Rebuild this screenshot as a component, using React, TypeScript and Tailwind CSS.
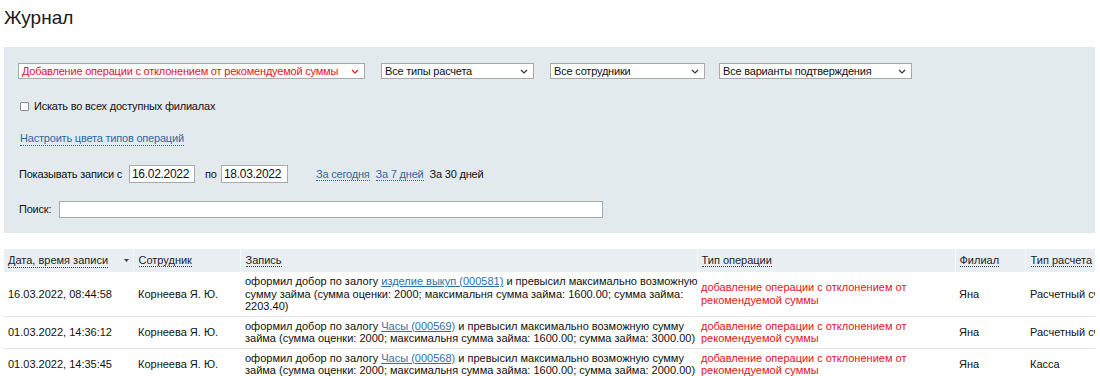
import React from "react";

function Chevron({ color = "#333" }: { color?: string }) {
  return (
    <svg width="8" height="5" viewBox="0 0 8 5" className="shrink-0">
      <polyline points="1,1 4,4 7,1" fill="none" stroke={color} strokeWidth="1.2" />
    </svg>
  );
}

function FakeSelect({ text, w, red }: { text: string; w: string; red?: boolean }) {
  return (
    <div
      className={`${w} h-[16px] bg-white border border-[#a9a9a9] flex items-center justify-between pl-[3px] pr-[5px] leading-[14px] ${
        red ? "text-[#e5131b]" : "text-[#111]"
      }`}
    >
      <span className="whitespace-nowrap">{text}</span>
      <Chevron color={red ? "#e5131b" : "#333"} />
    </div>
  );
}

function DLink({ children }: { children: React.ReactNode }) {
  return (
    <span className="text-[#2b6aa0] border-b border-dotted border-[#2b6aa0] leading-[13px] cursor-pointer whitespace-nowrap">
      {children}
    </span>
  );
}

function ULink({ children }: { children: React.ReactNode }) {
  return <span className="text-[#2e6fa7] underline">{children}</span>;
}

function HeadTitle({ children }: { children: React.ReactNode }) {
  return (
    <span className="border-b border-dotted border-[#444] leading-[13px] whitespace-nowrap">{children}</span>
  );
}

const rows = [
  {
    date: "16.03.2022, 08:44:58",
    emp: "Корнеева Я. Ю.",
    rec: (
      <>
        оформил добор по залогу <ULink>изделие выкуп (000581)</ULink> и превысил максимально возможную
        <br />
        сумму займа (сумма оценки: 2000; максимальня сумма займа: 1600.00; сумма займа:
        <br />
        2203.40)
      </>
    ),
    pay: "Расчетный счет",
  },
  {
    date: "01.03.2022, 14:36:12",
    emp: "Корнеева Я. Ю.",
    rec: (
      <>
        оформил добор по залогу <ULink>Часы (000569)</ULink> и превысил максимально возможную сумму
        <br />
        займа (сумма оценки: 2000; максимальня сумма займа: 1600.00; сумма займа: 3000.00)
      </>
    ),
    pay: "Расчетный счет",
  },
  {
    date: "01.03.2022, 14:35:45",
    emp: "Корнеева Я. Ю.",
    rec: (
      <>
        оформил добор по залогу <ULink>Часы (000568)</ULink> и превысил максимально возможную сумму
        <br />
        займа (сумма оценки: 2000; максимальня сумма займа: 1600.00; сумма займа: 2000.00)
      </>
    ),
    pay: "Касса",
  },
];

export default function App() {
  return (
    <div className="w-[1100px] h-[376px] overflow-hidden bg-white text-[11px] text-[#111] font-['Liberation_Sans',Arial,sans-serif]">
      <div className="h-[47px] pt-[6px] pl-[4px]">
        <h1 className="text-[19px] leading-[24px] text-[#1a1a1a]">Журнал</h1>
      </div>

      <div className="mx-[4px] w-[1091px] bg-[#e3eaee] pl-[14px] pt-[16px] pb-[15px] tracking-[-0.2px]">
        <div className="flex items-center">
          <FakeSelect text="Добавление операции с отклонением от рекомендуемой суммы" w="w-[347px]" red />
          <div className="ml-[16px]">
            <FakeSelect text="Все типы расчета" w="w-[153px]" />
          </div>
          <div className="ml-[16px]">
            <FakeSelect text="Все сотрудники" w="w-[155px]" />
          </div>
          <div className="ml-[14px]">
            <FakeSelect text="Все варианты подтверждения" w="w-[193px]" />
          </div>
        </div>

        <div className="mt-[21px] h-[13px] flex items-center pl-[2px]">
          <div className="w-[9px] h-[9px] bg-white border border-[#8a8a8a] rounded-[1px]" />
          <span className="ml-[5px] leading-[13px]">Искать во всех доступных филиалах</span>
        </div>

        <div className="mt-[19px] h-[14px] pl-[2px] flex items-start">
          <DLink>Настроить цвета типов операций</DLink>
        </div>

        <div className="mt-[19px] h-[18px] flex items-center pl-[1px]">
          <span className="w-[110px] whitespace-nowrap">Показывать записи с</span>
          <div className="w-[66px] h-[18px] bg-white border border-[#a9a9a9] text-[12px] leading-[16px] pl-[2px] tracking-[-0.3px]">
            16.02.2022
          </div>
          <span className="ml-[10px] w-[16px]">по</span>
          <div className="w-[67px] h-[18px] bg-white border border-[#a9a9a9] text-[12px] leading-[16px] pl-[2px] tracking-[-0.3px]">
            18.03.2022
          </div>
          <span className="ml-[28px]">
            <DLink>За сегодня</DLink>
          </span>
          <span className="ml-[6px]">
            <DLink>За 7 дней</DLink>
          </span>
          <span className="ml-[6px] whitespace-nowrap">За 30 дней</span>
        </div>

        <div className="mt-[18px] h-[17px] flex items-center pl-[1px]">
          <span className="w-[40px]">Поиск:</span>
          <div className="w-[544px] h-[17px] bg-white border border-[#a9a9a9]" />
        </div>
      </div>

      <div className="mx-[4px] mt-[16px] w-[1091px] overflow-hidden">
        <table className="table-fixed border-collapse w-[1221px] text-left">
          <colgroup>
            <col className="w-[129px]" />
            <col className="w-[107px]" />
            <col className="w-[457px]" />
            <col className="w-[258px]" />
            <col className="w-[70px]" />
            <col className="w-[200px]" />
          </colgroup>
          <thead>
            <tr className="h-[23px] bg-[#e8eef1] text-[#222]">
              <th className="font-normal pl-[4px] pr-[4px] align-middle">
                <div className="flex items-center justify-between">
                  <HeadTitle>Дата, время записи</HeadTitle>
                  <svg width="5" height="3" viewBox="0 0 5 3">
                    <polygon points="0,0 5,0 2.5,3" fill="#444" />
                  </svg>
                </div>
              </th>
              <th className="font-normal pl-[5px] border-l border-[#f6f9fa] align-middle">
                <HeadTitle>Сотрудник</HeadTitle>
              </th>
              <th className="font-normal pl-[5px] border-l border-[#f6f9fa] align-middle">
                <HeadTitle>Запись</HeadTitle>
              </th>
              <th className="font-normal pl-[4px] border-l border-[#f6f9fa] align-middle">
                <HeadTitle>Тип операции</HeadTitle>
              </th>
              <th className="font-normal pl-[4px] border-l border-[#f6f9fa] align-middle">
                <HeadTitle>Филиал</HeadTitle>
              </th>
              <th className="font-normal pl-[5px] border-l border-[#f6f9fa] align-middle">
                <HeadTitle>Тип расчета</HeadTitle>
              </th>
            </tr>
          </thead>
          <tbody>
            {rows.map((r, i) => (
              <tr key={i} className="border-b border-[#e3e3e3] align-middle leading-[12.5px]">
                <td className="pl-[4px] py-[3px] whitespace-nowrap">{r.date}</td>
                <td className="pl-[5px] py-[3px] whitespace-nowrap">{r.emp}</td>
                <td className="pl-[5px] py-[3px] whitespace-nowrap">{r.rec}</td>
                <td className="pl-[4px] py-[3px] whitespace-nowrap text-[#e5131b]">
                  добавление операции с отклонением от
                  <br />
                  рекомендуемой суммы
                </td>
                <td className="pl-[4px] py-[3px] whitespace-nowrap">Яна</td>
                <td className="pl-[5px] py-[3px] whitespace-nowrap">{r.pay}</td>
              </tr>
            ))}
          </tbody>
        </table>
      </div>
    </div>
  );
}
